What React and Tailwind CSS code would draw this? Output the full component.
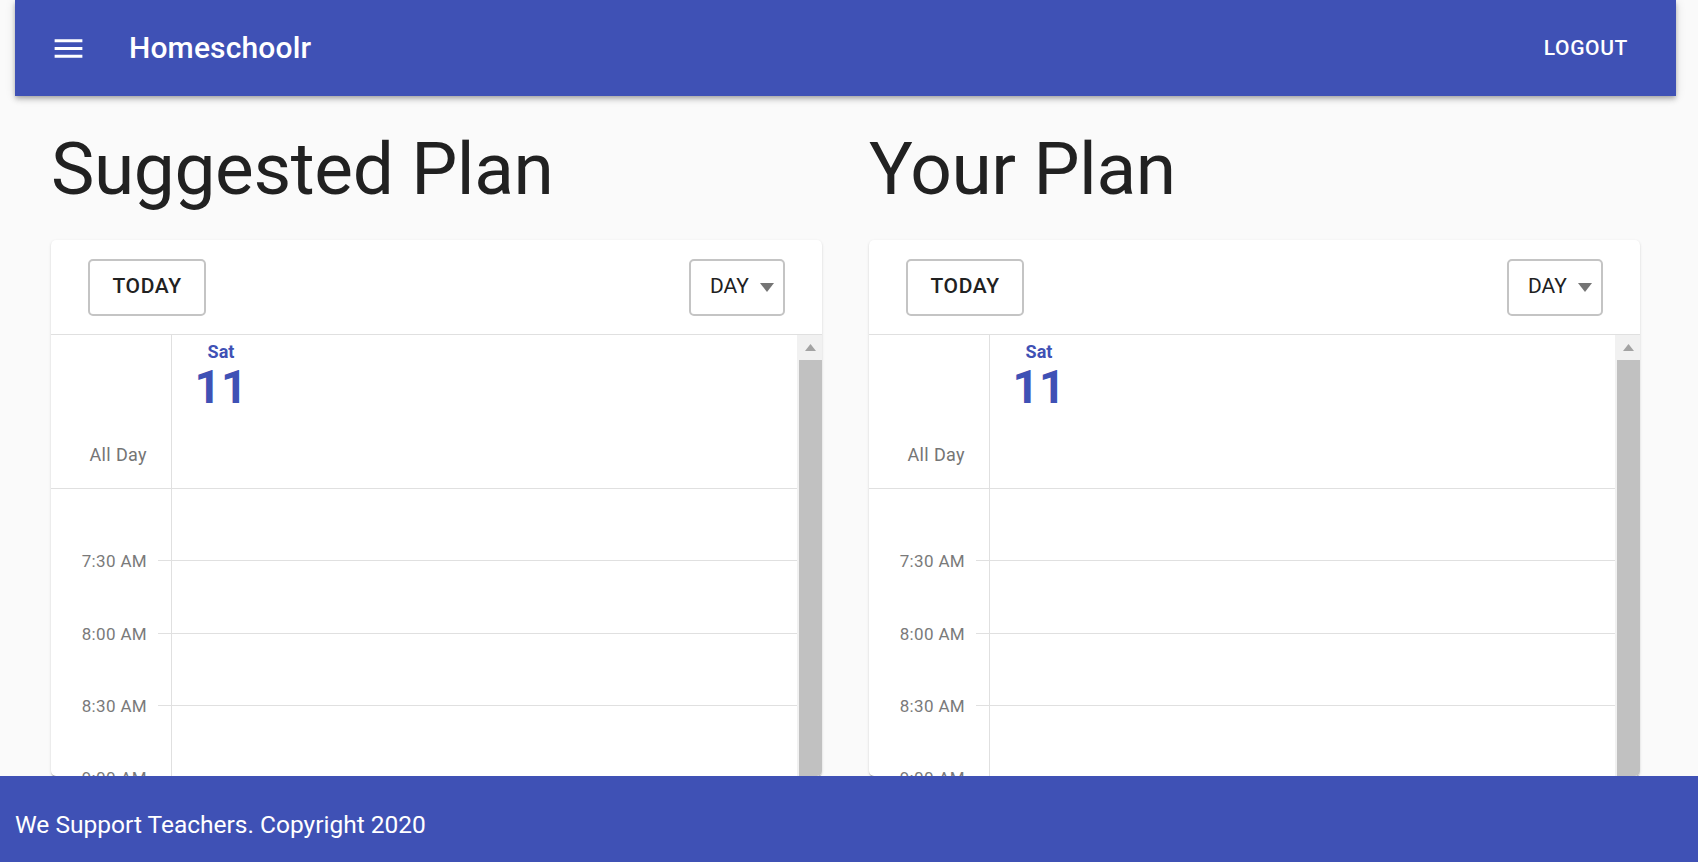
const slots = ['7:30 AM', '8:00 AM', '8:30 AM', '9:00 AM', '9:30 AM'];

const MenuIcon = () => (
  <svg viewBox="0 0 24 24" className="w-[37px] h-[37px] fill-white">
    <path d="M3 18h18v-2H3v2zm0-5h18v-2H3v2zm0-7v2h18V6H3z" />
  </svg>
);

const Header = () => (
  <header className="ml-[15px] mr-[22px] h-[96px] shrink-0 bg-[#3f51b5] text-white flex items-center pl-[35px] pr-[48px] relative z-10 shadow-[0_2px_4px_-1px_rgba(0,0,0,0.2),0_4px_5px_0_rgba(0,0,0,0.14),0_1px_10px_0_rgba(0,0,0,0.12)]">
    <MenuIcon />
    <h1 className="ml-[42px] -mt-[2px] text-[30px] font-medium tracking-[0.005em]">Homeschoolr</h1>
    <button className="ml-auto mt-[1px] text-[21px] font-medium tracking-[0.03em] uppercase">Logout</button>
  </header>
);

const Scrollbar = () => (
  <div className="w-[25px] shrink-0 bg-[#f1f1f1] flex flex-col pl-[2px]">
    <div className="h-[25px] flex items-center justify-center">
      <svg viewBox="0 0 11 7" className="w-[11px] h-[7px] fill-[#a3a3a3]">
        <path d="M5.5 0L11 7H0z" />
      </svg>
    </div>
    <div className="flex-1 bg-[#c1c1c1]" />
  </div>
);

const Calendar = () => (
  <div className="flex-1 min-h-0 bg-white rounded-[5px] overflow-hidden flex flex-col shadow-[0_2px_1px_-1px_rgba(0,0,0,0.2),0_1px_1px_0_rgba(0,0,0,0.14),0_1px_3px_0_rgba(0,0,0,0.12)]">
    <div className="h-[95px] shrink-0 border-b border-[#e0e0e0] flex items-center justify-between px-[37px]">
      <button className="w-[118px] h-[57px] rounded-[5px] border-2 border-[#c4c4c4] text-[21px] font-medium tracking-[0.03em] text-[#212121]">
        TODAY
      </button>
      <button className="w-[96px] h-[57px] rounded-[5px] border-2 border-[#c4c4c4] flex items-center pl-[19px] text-[21px] text-[#212121]">
        DAY
        <svg viewBox="0 0 14 9" className="ml-[11px] w-[14px] h-[9px] fill-[#757575]">
          <path d="M0 0h14L7 9z" />
        </svg>
      </button>
    </div>
    <div className="flex-1 min-h-0 flex">
      <div className="flex-1 flex flex-col">
        <div className="h-[154px] shrink-0 flex border-b border-[#e0e0e0]">
          <div className="w-[121px] shrink-0 border-r border-[#e0e0e0] flex items-end justify-end pr-[24px] pb-[20px]">
            <span className="text-[18px] text-[#757575] tracking-[0.02em]">All Day</span>
          </div>
          <div className="pl-[17px] pt-[5px]">
            <div className="w-[64px] flex flex-col items-center text-[#3f51b5]">
              <span className="text-[18px] font-bold leading-[24px]">Sat</span>
              <span className="text-[46px] font-bold leading-[47px]">11</span>
            </div>
          </div>
        </div>
        {slots.map((t) => (
          <div key={t} className="h-[72.3px] shrink-0 flex">
            <div className="w-[121px] shrink-0 border-r border-[#e0e0e0] flex items-end justify-end">
              <span className="h-[20px] leading-[20px] -mb-[10px] mr-[11px] text-[17px] text-[#7a7a7a] tracking-[0.02em]">{t}</span>
              <span className="w-[13px] h-px bg-[#e0e0e0]" />
            </div>
            <div className="flex-1 border-b border-[#e0e0e0]" />
          </div>
        ))}
      </div>
      <Scrollbar />
    </div>
  </div>
);

const Column = ({ title }) => (
  <section className="flex flex-col min-h-0">
    <h2 className="mt-[38px] mb-[34px] text-[73px] leading-[73px] text-[#212121] tracking-[-0.005em]">{title}</h2>
    <Calendar />
  </section>
);

export default function App() {
  return (
    <div className="h-screen overflow-hidden bg-[#fafafa] flex flex-col font-['Roboto',sans-serif]">
      <Header />
      <main className="flex-1 min-h-0 overflow-hidden grid grid-cols-[771px_771px] gap-x-[47px] pl-[51px] -mt-[1px]">
        <Column title="Suggested Plan" />
        <Column title="Your Plan" />
      </main>
      <footer className="h-[86px] shrink-0 bg-[#3f51b5] text-white flex items-center pt-[12px] pl-[15px] text-[24.5px]">
        We Support Teachers. Copyright 2020
      </footer>
    </div>
  );
}
